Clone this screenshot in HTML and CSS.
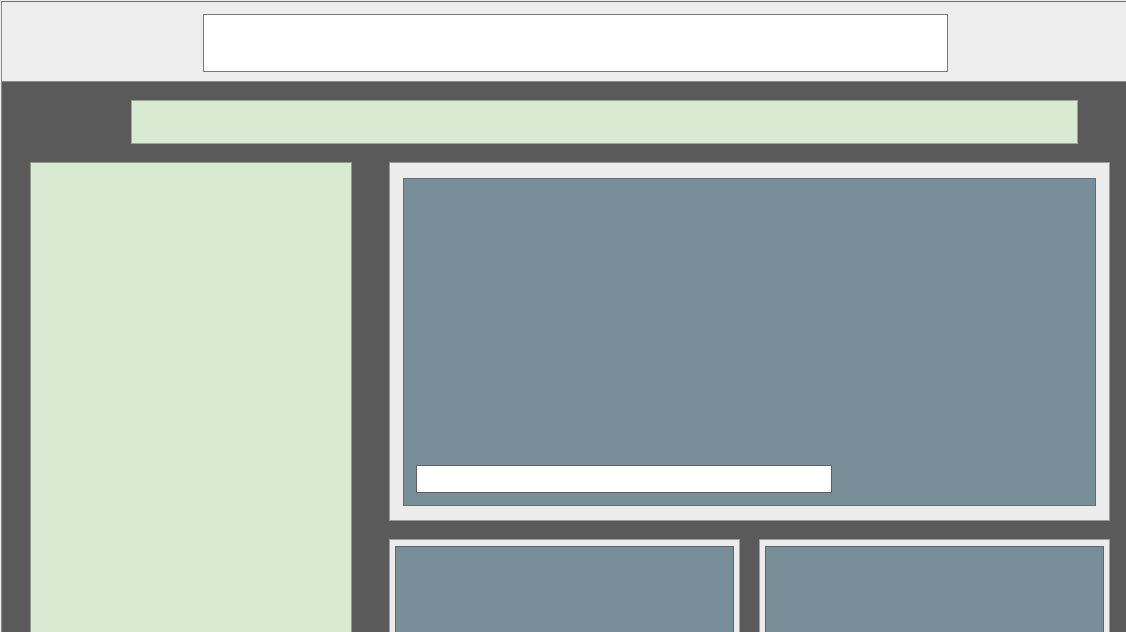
FILE: index.html
```html
<!DOCTYPE html>
<html lang="en">
<head>
<meta charset="utf-8">
<title>Layout</title>
<link rel="stylesheet" href="styles.css">
</head>
<body>
<div class="frame">
  <header class="topbar">
    <div class="search"></div>
  </header>
  <main class="stage">
    <div class="banner"></div>
    <div class="content">
      <aside class="sidebar"></aside>
      <section class="main-col">
        <div class="panel">
          <div class="hero">
            <div class="hero-input"></div>
          </div>
        </div>
        <div class="cards">
          <div class="card"><div class="card-body"></div></div>
          <div class="card"><div class="card-body"></div></div>
        </div>
      </section>
    </div>
  </main>
</div>
</body>
</html>
```

FILE: styles.css
```css
* { box-sizing: border-box; }
html, body {
  margin: 0;
  padding: 0;
  height: 632px;
  overflow: hidden;
  background: #ededed;
  font-family: "Liberation Sans", Arial, sans-serif;
}
.frame {
  margin: 1px 0 0 1px;
  border-top: 1px solid #6e6e6e;
  border-left: 1px solid #8a8a8a;
  height: 631px;
  display: flex;
  flex-direction: column;
}
.topbar {
  height: 80px;
  flex: none;
  background: #ededed;
  border-bottom: 1px solid #8c8c8c;
  padding: 12px 0 0 201px;
}
.search {
  width: 745px;
  height: 58px;
  background: #ffffff;
  border: 1px solid #7a7a7a;
}
.stage {
  flex: 1;
  background: #5a5a5a;
  padding-top: 18px;
  overflow: hidden;
}
.banner {
  margin-left: 129px;
  width: 947px;
  height: 44px;
  background: #d9ead3;
  border: 1px solid #9aa59a;
}
.content {
  margin-top: 18px;
  padding-left: 28px;
  display: grid;
  grid-template-columns: 322px 721px;
  column-gap: 37px;
  align-items: start;
}
.sidebar {
  height: 600px;
  background: #d9ead3;
  border: 1px solid #8f9a8f;
}
.main-col {
  display: flex;
  flex-direction: column;
  gap: 18px;
}
.panel {
  height: 359px;
  background: #ececec;
  border: 1px solid #9a9a9a;
  padding: 15px 13px 14px 13px;
  display: flex;
}
.hero {
  flex: 1;
  background: #788f9a;
  border: 1px solid #666c70;
  padding: 12px;
  display: flex;
  flex-direction: column;
  justify-content: flex-end;
}
.hero-input {
  width: 416px;
  height: 28px;
  background: #ffffff;
  border: 1px solid #5f5f5f;
}
.cards {
  display: grid;
  grid-template-columns: 1fr 1fr;
  column-gap: 19px;
}
.card {
  height: 220px;
  background: #ececec;
  border: 1px solid #a0a0a0;
  padding: 6px 5px 0 5px;
  display: flex;
}
.card-body {
  flex: 1;
  background: #788f9a;
  border: 1px solid #5f676c;
}
```
